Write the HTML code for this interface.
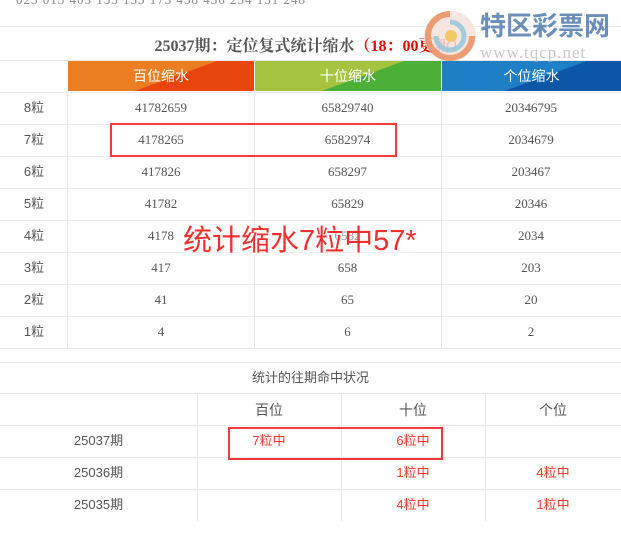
<!DOCTYPE html>
<html><head><meta charset="utf-8"><style>
*{margin:0;padding:0;box-sizing:border-box}
body{width:621px;height:542px;background:#fff;position:relative;overflow:hidden;font-family:"Liberation Serif","Noto Serif CJK SC",serif;color:#555}
.a{position:absolute;white-space:nowrap}
.hl{position:absolute;left:0;width:621px;height:1px;background:#e8e8e8}
.vl{position:absolute;width:1px;background:#e8e8e8}
.c{position:absolute;text-align:center;font-size:13px;line-height:32px;height:32px}
.s{font-family:"Liberation Sans","Noto Sans CJK SC",sans-serif}
.hd{position:absolute;top:61px;height:30px;line-height:30px;text-align:center;color:#fff;font-size:14px;font-family:"Liberation Sans","Noto Sans CJK SC",sans-serif}
.r{color:#f03a2a}
</style></head><body>
<div class="a" style="top:-8px;left:16px;font-size:13px;color:#888;letter-spacing:1px">025 013 405 155 153 173 458 436 254 151 248</div>
<div class="hl" style="top:26px"></div>
<div class="a" style="top:33px;left:0;width:621px;text-align:center;font-size:16px;font-weight:bold;color:#555">25037期：定位复式统计缩水<span style="color:#e00">（18：00更新）</span></div>
<div class="hl" style="top:60px"></div>
<div class="hd" style="left:68px;width:186px;background:linear-gradient(160deg,#ec7e22 55%,#e8450c 56%)">百位缩水</div>
<div class="hd" style="left:255px;width:186px;background:linear-gradient(160deg,#a6c440 55%,#4cb038 56%)">十位缩水</div>
<div class="hd" style="left:442px;width:179px;background:linear-gradient(160deg,#1e7ec6 55%,#0c56a8 56%)">个位缩水</div>
<div class="vl" style="left:67px;top:92px;height:256px"></div>
<div class="vl" style="left:254px;top:92px;height:256px"></div>
<div class="vl" style="left:441px;top:92px;height:256px"></div>
<div class="hl" style="top:92px"></div><div class="hl" style="top:124px"></div><div class="hl" style="top:156px"></div><div class="hl" style="top:188px"></div><div class="hl" style="top:220px"></div><div class="hl" style="top:252px"></div><div class="hl" style="top:284px"></div><div class="hl" style="top:316px"></div><div class="hl" style="top:348px"></div>
<div class="c s" style="top:92px;left:0;width:68px">8粒</div><div class="c" style="top:92px;left:68px;width:186px">41782659</div><div class="c" style="top:92px;left:254px;width:187px">65829740</div><div class="c" style="top:92px;left:441px;width:180px">20346795</div>
<div class="c s" style="top:124px;left:0;width:68px">7粒</div><div class="c" style="top:124px;left:68px;width:186px">4178265</div><div class="c" style="top:124px;left:254px;width:187px">6582974</div><div class="c" style="top:124px;left:441px;width:180px">2034679</div>
<div class="c s" style="top:156px;left:0;width:68px">6粒</div><div class="c" style="top:156px;left:68px;width:186px">417826</div><div class="c" style="top:156px;left:254px;width:187px">658297</div><div class="c" style="top:156px;left:441px;width:180px">203467</div>
<div class="c s" style="top:188px;left:0;width:68px">5粒</div><div class="c" style="top:188px;left:68px;width:186px">41782</div><div class="c" style="top:188px;left:254px;width:187px">65829</div><div class="c" style="top:188px;left:441px;width:180px">20346</div>
<div class="c s" style="top:220px;left:0;width:68px">4粒</div><div class="c" style="top:220px;left:68px;width:186px">4178</div><div class="c" style="top:220px;left:254px;width:187px">6582</div><div class="c" style="top:220px;left:441px;width:180px">2034</div>
<div class="c s" style="top:252px;left:0;width:68px">3粒</div><div class="c" style="top:252px;left:68px;width:186px">417</div><div class="c" style="top:252px;left:254px;width:187px">658</div><div class="c" style="top:252px;left:441px;width:180px">203</div>
<div class="c s" style="top:284px;left:0;width:68px">2粒</div><div class="c" style="top:284px;left:68px;width:186px">41</div><div class="c" style="top:284px;left:254px;width:187px">65</div><div class="c" style="top:284px;left:441px;width:180px">20</div>
<div class="c s" style="top:316px;left:0;width:68px">1粒</div><div class="c" style="top:316px;left:68px;width:186px">4</div><div class="c" style="top:316px;left:254px;width:187px">6</div><div class="c" style="top:316px;left:441px;width:180px">2</div>
<div class="a" style="left:110px;top:123px;width:287px;height:34px;border:2px solid #f23a3a"></div>
<div class="a s" style="left:183px;top:223px;font-size:29px;color:#f03030;line-height:36px;background:rgba(255,255,255,0.4)">统计缩水7粒中57*</div>

<div class="hl" style="top:362px"></div>
<div class="a s" style="top:368px;left:0;width:621px;text-align:center;font-size:13px;line-height:20px">统计的往期命中状况</div>
<div class="hl" style="top:393px"></div><div class="hl" style="top:425px"></div><div class="hl" style="top:457px"></div><div class="hl" style="top:489px"></div>
<div class="vl" style="left:197px;top:393px;height:128px"></div>
<div class="vl" style="left:341px;top:393px;height:128px"></div>
<div class="vl" style="left:485px;top:393px;height:128px"></div>
<div class="c s" style="top:394px;left:197px;width:144px;font-size:14px">百位</div><div class="c s" style="top:394px;left:341px;width:144px;font-size:14px">十位</div><div class="c s" style="top:394px;left:485px;width:136px;font-size:14px">个位</div>
<div class="c s" style="top:425px;left:0;width:197px">25037期</div><div class="c s r" style="top:425px;left:197px;width:144px">7粒中</div><div class="c s r" style="top:425px;left:341px;width:144px">6粒中</div>
<div class="c s" style="top:457px;left:0;width:197px">25036期</div><div class="c s r" style="top:457px;left:341px;width:144px">1粒中</div><div class="c s r" style="top:457px;left:485px;width:136px">4粒中</div>
<div class="c s" style="top:489px;left:0;width:197px">25035期</div><div class="c s r" style="top:489px;left:341px;width:144px">4粒中</div><div class="c s r" style="top:489px;left:485px;width:136px">1粒中</div>
<div class="a" style="left:228px;top:427px;width:215px;height:33px;border:2px solid #f23a3a"></div>

<svg class="a" style="left:418px;top:8px" width="64" height="56" viewBox="0 0 64 56">
<ellipse cx="32" cy="28" rx="26" ry="25" fill="#f3e2dc" opacity="0.85"/>
<path d="M32 6a22 22 0 1 0 22 22" fill="none" stroke="#e78a5a" stroke-width="6" opacity="0.8"/>
<path d="M32 14a14 14 0 1 1-14 14" fill="none" stroke="#8ec4d8" stroke-width="5" opacity="0.8"/>
<circle cx="33" cy="28" r="6" fill="#f3c24a" opacity="0.8"/>
</svg>
<div class="a s" style="left:480px;top:10px;font-size:26px;font-weight:bold;color:#6b8fb8;line-height:32px">特区彩票网</div>
<div class="a" style="left:480px;top:42px;font-size:17px;color:#c8c8c8;line-height:22px;letter-spacing:1px">www.tqcp.net</div>
</body></html>
